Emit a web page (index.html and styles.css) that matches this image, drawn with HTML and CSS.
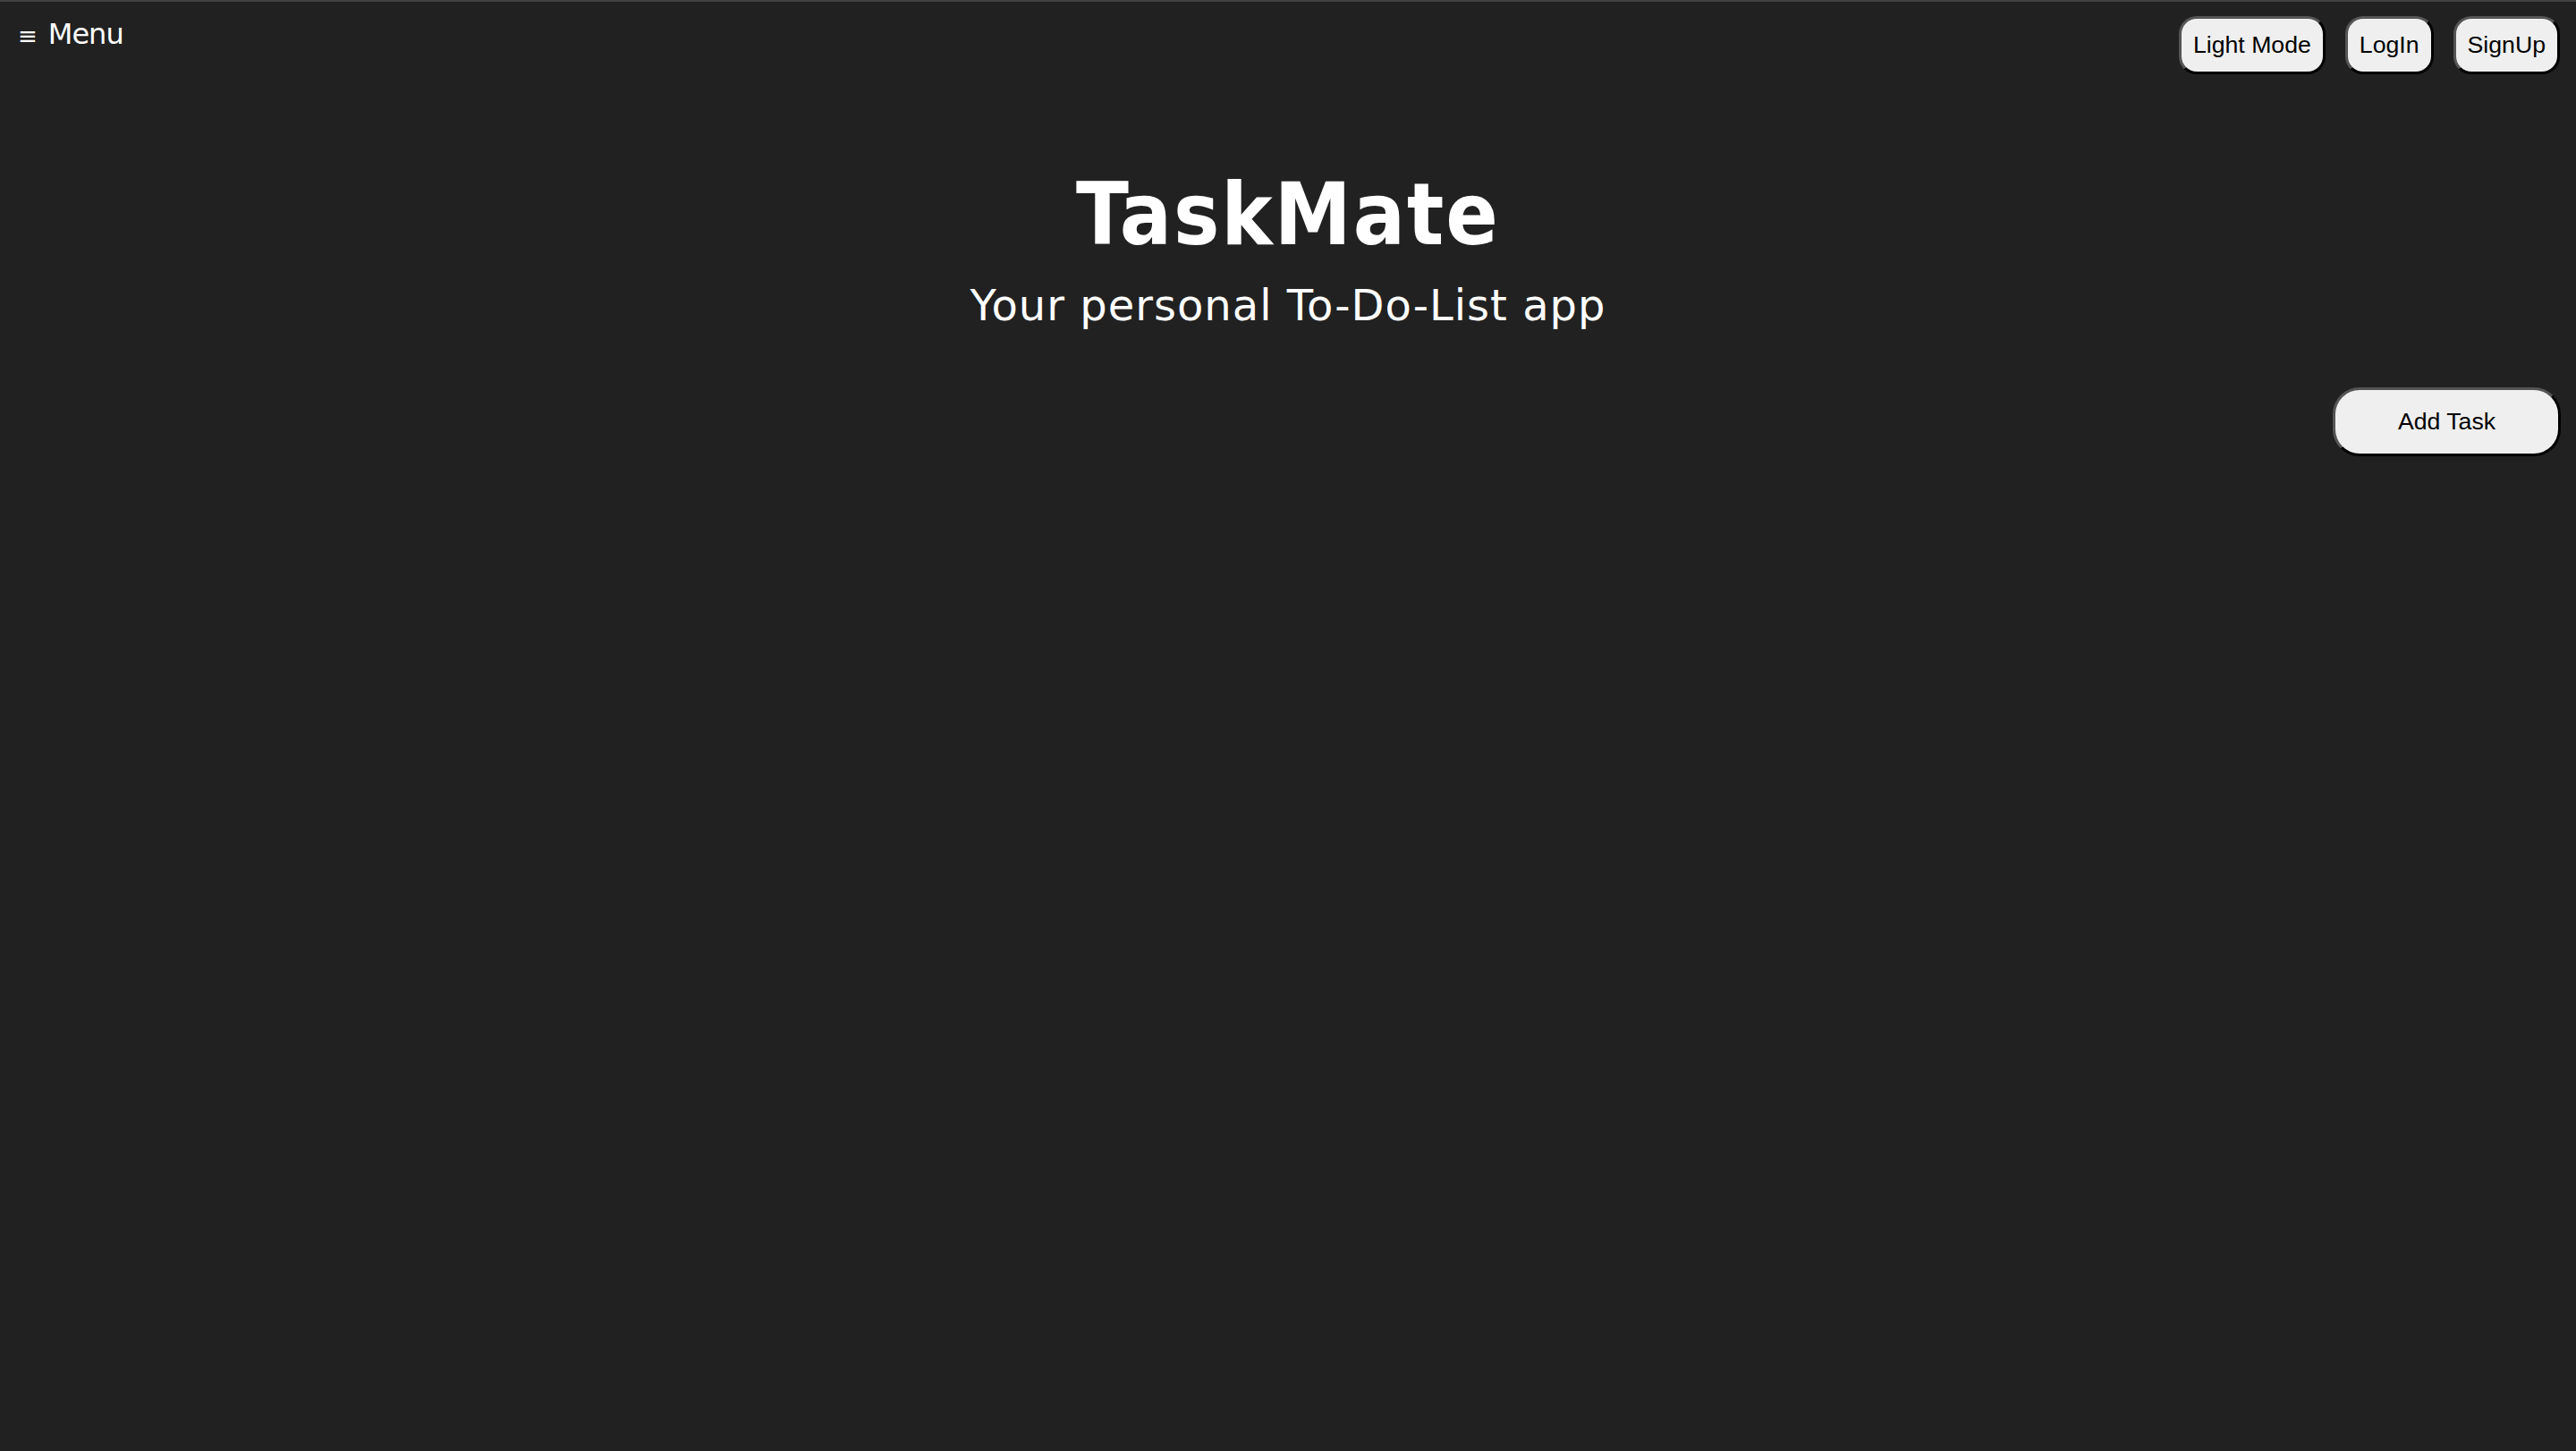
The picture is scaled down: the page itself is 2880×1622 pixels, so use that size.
FILE: index.html
```html
<!DOCTYPE html>
<html lang="en">
<head>
<meta charset="utf-8">
<title>TaskMate</title>
<link rel="stylesheet" href="styles.css">
</head>
<body>
<header class="topbar">
  <div class="menu"><span class="menu-icon">≡</span><span class="menu-label">Menu</span></div>
  <nav class="actions">
    <button class="btn">Light Mode</button>
    <button class="btn">LogIn</button>
    <button class="btn">SignUp</button>
  </nav>
</header>
<main class="hero">
  <h1 class="title">TaskMate</h1>
  <p class="subtitle">Your personal To-Do-List app</p>
</main>
<div class="task-row">
  <button class="btn btn-add">Add Task</button>
</div>
</body>
</html>
```

FILE: styles.css
```css
html, body {
  margin: 0;
  padding: 0;
}

body {
  background: #212121;
  border-top: 2px solid #414141;
  min-height: 1620px;
  color: #ffffff;
  font-family: "DejaVu Sans", Verdana, sans-serif;
}

.topbar {
  display: flex;
  justify-content: space-between;
  align-items: flex-start;
  padding: 16px 18px 0 20px;
}

.menu {
  display: flex;
  align-items: baseline;
  margin-top: 2px;
  font-size: 32px;
  line-height: 37px;
  color: #ffffff;
}

.menu-icon {
  font-size: 26px;
  margin-right: 12px;
}

.menu-label {
  letter-spacing: -1px;
}

.actions {
  display: flex;
  gap: 22px;
}

.btn {
  font-family: "Liberation Sans", Arial, sans-serif;
  font-size: 26.67px;
  line-height: 31px;
  color: #000000;
  background: #efefef;
  padding: 14px 13px;
  border: 3px solid;
  border-color: #555555 #000000 #000000 #555555;
  border-radius: 20px;
  margin: 0;
  cursor: pointer;
}

.hero {
  text-align: center;
}

.title {
  margin: 101px 0 0;
  font-family: "DejaVu Sans Condensed", "DejaVu Sans", sans-serif;
  font-weight: bold;
  font-size: 96px;
  line-height: 112px;
  letter-spacing: 2px;
}

.subtitle {
  margin: 17px 0 0;
  font-family: "DejaVu Sans", sans-serif;
  font-size: 48px;
  line-height: 56px;
  letter-spacing: 1px;
}

.task-row {
  display: flex;
  justify-content: flex-end;
  padding-right: 17px;
  margin-top: 64px;
}

.btn-add {
  width: 255px;
  padding: 20px 13px;
  border-radius: 30px;
}
```
